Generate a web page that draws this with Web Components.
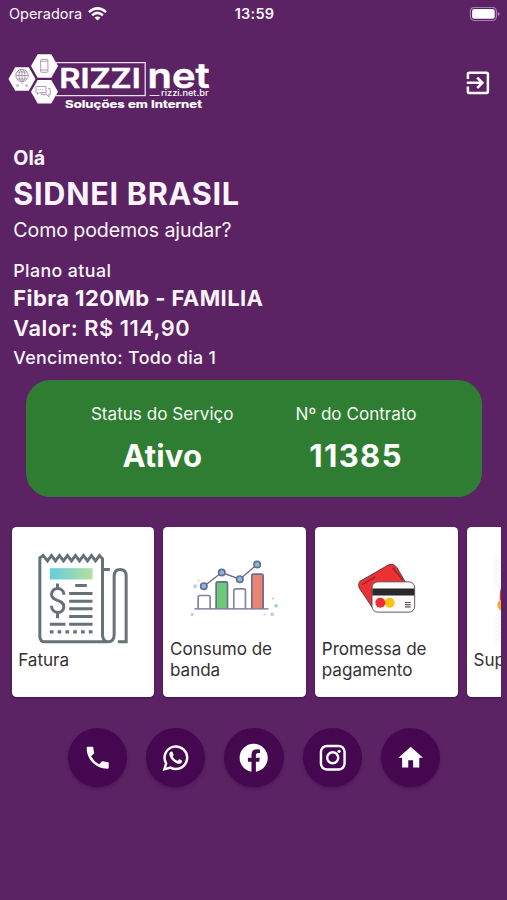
<!DOCTYPE html>
<html lang="pt-BR">
<head>
<meta charset="utf-8">
<title>Rizzi Net</title>
<style>
html,body{margin:0;padding:0;background:#5b2364}
body{font-family:Inter,"Liberation Sans",sans-serif;color:#fbf5fb}
</style>
</head>
<body>
<rizzi-app></rizzi-app>
<script>
function define(name, html) {
  const tpl = document.createElement('template');
  tpl.innerHTML = html;
  customElements.define(name, class extends HTMLElement {
    constructor() {
      super();
      this.attachShadow({ mode: 'open' }).appendChild(tpl.content.cloneNode(true));
    }
  });
}

define('status-bar', `
<style>
:host{display:grid;grid-template-columns:1fr auto 1fr;align-items:center;height:28px;padding:0 7px 0 9px;font-size:14.5px;line-height:28px}
.l{display:flex;align-items:center;gap:6px;letter-spacing:-.02px}
.t{font-weight:600;letter-spacing:.25px}
.r{justify-self:end;display:flex}
.r svg,.l svg{display:block}
</style>
<div class="l"><span>Operadora</span>
<svg width="19" height="14" viewBox="0 0 19 14" fill="none" stroke="#fff" stroke-width="2.5"><path d="M1 5.1Q9.5-2.4 18 5.1"/><path d="M4.1 8.3Q9.5 3.5 14.9 8.3"/><path d="M9.5 13.6L6.4 10.6Q9.5 8.2 12.6 10.6Z" fill="#fff" stroke="none"/></svg></div>
<span class="t">13:59</span>
<div class="r"><svg width="31" height="15" viewBox="0 0 31 15"><rect x="1.4" y=".3" width="26" height="13.2" rx="4" fill="none" stroke="#a27fa8" stroke-width="1.2"/><rect x="3.1" y="2" width="22.6" height="9.8" rx="2.2" fill="#fff"/><path d="M28.8 4.7q2 .7 2 2.2t-2 2.2z" fill="#a27fa8"/></svg></div>
`);

define('brand-logo', `
<style>
:host{display:block}
svg{display:block}
text{fill:#fff;font-family:Inter,"Liberation Sans",sans-serif}
</style>
<svg width="216" height="64" viewBox="0 50 216 64">
<g fill="none" stroke="#e9dcec" stroke-width="1.3"><path d="M56 62.7H145.2V95.6H56"/></g>
<g fill="#fff"><path d="M8.5 79L15.2 67.2H28.8L35.5 79L28.8 90.8H15.2Z"/><path d="M31 66L37.7 54.2H51.3L58 66L51.3 77.8H37.7Z"/><path d="M31 91.7L37.7 79.9H51.3L58 91.7L51.3 103.5H37.7Z"/></g>
<g fill="none" stroke="#a58caa" stroke-width=".9">
<rect x="40.7" y="59.3" width="7.2" height="13" rx="1"/><path d="M40.7 61.2h7.2M40.7 70h7.2"/>
<circle cx="22" cy="75.5" r="6.2"/><ellipse cx="22" cy="75.5" rx="3" ry="6.2"/><path d="M22 69.3v14.5M15.8 75.5h12.4M17 72h10M17 79h10"/>
<path d="M36 86.5h10v6.2h-6.5l-2 2v-2H36zM47.8 88.7h2.4v6h-1.4v2.2l-2.4-2.2h-4.8v-1.6"/><path d="M38.3 89.6h5.5" stroke-dasharray="1 1"/>
</g>
<circle cx="17.5" cy="85.5" r="1.5" fill="#c9b9cc"/><circle cx="26.5" cy="85.5" r="1.5" fill="#c9b9cc"/>
<text x="59.3" y="88.3" font-size="26.5" font-weight="600" stroke="#fff" stroke-width=".5" textLength="81.5" lengthAdjust="spacingAndGlyphs">RIZZI</text>
<text x="147.5" y="88" font-size="34.5" font-weight="600" stroke="#fff" stroke-width=".5" textLength="62" lengthAdjust="spacingAndGlyphs">net</text>
<path d="M149.5 95.5H159.5" stroke="#e9dcec" stroke-width="1"/>
<text x="161" y="95.6" font-size="8.6" font-weight="500" textLength="47.5" lengthAdjust="spacingAndGlyphs">rizzi.net.br</text>
<text x="65" y="108.4" font-size="11" font-weight="700" stroke="#fff" stroke-width=".2" textLength="137" lengthAdjust="spacingAndGlyphs">Soluções em Internet</text>
</svg>`);

define('app-header', `
<style>
:host{display:flex;align-items:flex-start;justify-content:space-between;padding:22px 17.2px 0 0;height:92px;box-sizing:content-box}
.exit{display:block;margin-top:20.5px}
</style>
<brand-logo></brand-logo>
<svg class="exit" width="24" height="24" viewBox="0 0 24 24" fill="none" stroke="#fff" stroke-width="2.5"><path d="M1.9 8V3.1Q1.9 1.7 3.3 1.7H20.5Q21.9 1.7 21.9 3.1V20.5Q21.9 21.9 20.5 21.9H3.3Q1.9 21.9 1.9 20.5V15.6M.8 11.8H15M11.2 6.6L16.4 11.8L11.2 17"/></svg>`);

define('customer-summary', `
<style>
:host{display:flex;flex-direction:column;padding-left:13.3px;margin-top:-.5px;white-space:nowrap}
.hello{font-weight:700;font-size:19.6px;line-height:32px}
.name{font-weight:700;font-size:30.6px;line-height:40px;letter-spacing:.72px}
.ask{font-size:19.6px;line-height:32px;letter-spacing:-.1px}
.label{margin-top:10px;font-weight:500;font-size:17.8px;line-height:29px;letter-spacing:.4px}
.plan{font-weight:700;font-size:22px;line-height:27px;letter-spacing:.4px}
.price{font-weight:600;font-size:21.8px;line-height:32px;letter-spacing:.53px}
.due{font-weight:500;font-size:17.8px;line-height:27px;letter-spacing:.3px}
</style>
<div class="hello">Olá</div>
<div class="name">SIDNEI BRASIL</div>
<div class="ask">Como podemos ajudar?</div>
<div class="label">Plano atual</div>
<div class="plan">Fibra 120Mb - FAMILIA</div>
<div class="price">Valor: R$ 114,90</div>
<div class="due">Vencimento: Todo dia 1</div>`);

define('contract-status', `
<style>
:host{display:flex;justify-content:space-evenly;box-sizing:border-box;margin:9.5px 25.5px 0 26px;height:117px;padding:18px 3px 0 3px;border-radius:24.5px;background:#2f7d33;color:#f4faf0}
</style><slot></slot>`);

define('status-item', `
<style>
:host{display:flex;flex-direction:column;align-items:center;font-size:17.1px;line-height:32px;white-space:nowrap}
.v{font-weight:700;font-size:31px;line-height:52px;color:#fff;letter-spacing:var(--track,.1px)}
</style><slot></slot><div class="v"><slot name="value"></slot></div>`);

define('card-strip', `
<style>
:host{display:flex;gap:9.3px;margin:29.7px 6px 0 0;padding-left:11.5px;overflow:hidden;height:175px}
</style><slot></slot>`);

define('service-card', `
<style>
:host{display:block;flex:none;box-sizing:border-box;width:142.5px;height:170px;border-radius:4.5px;background:#fff;color:#343036;box-shadow:0 1px 2px #30083a99}
.pic{height:105.5px}
.txt{display:flex;align-items:center;height:54px;padding:0 6px 0 6.7px;font-size:17.1px;line-height:21px;letter-spacing:-.04px}
::slotted(svg){display:block;width:142.5px;height:106px;overflow:visible}
</style>
<div class="pic"><slot name="icon"></slot></div><div class="txt"><span><slot></slot></span></div>`);

define('contact-bar', `
<style>:host{display:flex;justify-content:center;gap:19px;margin-top:26.3px;padding-left:1px}</style><slot></slot>`);

define('round-button', `
<style>
:host{display:grid;place-items:center;width:59.3px;height:59.3px;border-radius:50%;background:#460751;box-shadow:0 2px 3px #3d0b4880}
::slotted(svg){display:block;width:29.4px;height:29.4px;fill:#fff}
</style><slot></slot>`);

define('rizzi-app', `
<style>
:host{display:block;width:507px;height:900px;overflow:hidden;background:#5b2364}
</style>
<status-bar></status-bar>
<app-header></app-header>
<customer-summary></customer-summary>
<contract-status>
  <status-item>Status do Serviço<span slot="value">Ativo</span></status-item>
  <status-item style="--track:1.4px">Nº do Contrato<span slot="value">11385</span></status-item>
</contract-status>
<card-strip>
  <service-card>
    <svg slot="icon" viewBox="36.5 34.5 427.5 318" fill="none" stroke="#687178" stroke-width="9">
      <defs><linearGradient id="bar"><stop offset="0" stop-color="#62cfdc"/><stop offset="1" stop-color="#b5dea0"/></linearGradient></defs>
      <path d="M120 367V127L130 120L143 136L155 120L167 136L179 120L191 136L203 120L215 136L227 120L239 136L251 120L263 136L275 120L287 136L299 120L308 130V357Q308 379 325 379Q343 379 343 357V182Q343 162 361 162Q379 162 379 182V379H354M120 362Q120 379 137 379H325M308 162H330"/>
      <rect x="150" y="158" width="128" height="34" fill="url(#bar)" stroke="none"/>
      <path d="M226 210H261M208 234H278M208 257H278M208 280H278M208 303H278M208 326H278M150 326H197"/>
      <path d="M150 349H280" stroke-width="10" stroke-dasharray="11 12.4"/>
      <path d="M173 204V219M173 291V308M192 238C192 213 155 213 155 237C155 260 192 249 192 274C192 297 155 297 155 271"/>
    </svg>Fatura</service-card>
  <service-card>
    <svg slot="icon" viewBox="9.6 34.5 427.5 318" fill="none" stroke="#6b6c88" stroke-width="5">
      <path d="M115 279V245Q115 240 120 240H146Q151 240 151 245V279" stroke="#82849c"/>
      <path d="M169 279V204Q169 199 174 199H198Q203 199 203 204V279" fill="#6ccb7b"/>
      <path d="M222 279V225Q222 220 227 220H252Q257 220 257 225V279" stroke="#82849c"/>
      <path d="M276 279V181Q276 176 281 176H305Q310 176 310 181V279" fill="#e98673"/>
      <path d="M104 280H326M132 212L186 171L240 191L292 147" stroke-width="4"/>
      <g fill="#80bbeb"><circle cx="132" cy="212" r="9.5"/><circle cx="186" cy="171" r="9.5"/><circle cx="240" cy="191" r="9.5"/><circle cx="292" cy="147" r="9.5"/></g>
      <g stroke="none" fill="#cfcbd6"><circle cx="106" cy="212" r="6"/><circle cx="116" cy="195" r="3"/><circle cx="97" cy="297" r="5"/><circle cx="337" cy="296" r="6"/><circle cx="314" cy="297" r="3"/><circle cx="339" cy="249" r="3.5"/><circle cx="349" cy="271" r="5.5" fill="#9bcdf0"/></g>
    </svg>Consumo de banda</service-card>
  <service-card>
    <svg slot="icon" viewBox="15 34.5 427.5 318" fill="none" stroke="#554047" stroke-width="3">
      <path d="M149 198L236 148Q251 142 261 157L292 210L195 282L187 276L147 216Q144 206 149 198Z" fill="#ed3034"/>
      <path d="M157 207L196 184M248 156L278 194" stroke="#8d252e" stroke-width="4"/>
      <rect x="186" y="199" width="128" height="91" rx="17" fill="#fafafa" stroke-width="2.6"/>
      <path d="M187 219H313V240H187Z" fill="#2b282b" stroke="none"/>
      <circle cx="239" cy="262" r="15" fill="#fcc111" stroke="none"/><circle cx="211" cy="262" r="15" fill="#ef2e35" stroke="none"/>
      <path d="M285 261H302M285 267.5H302M285 274H302" stroke="#555" stroke-width="3.5"/>
    </svg>Promessa de pagamento</service-card>
  <service-card>
    <svg slot="icon" viewBox="470 34.5 427.5 318">
      <g stroke="#e2dce2" stroke-width="2" stroke-dasharray="8 0"><path d="M553 130l10-9M553 142l20-15M553 154l20-15M553 166l20-15M553 178l20-15M553 190l20-15M553 202l20-15M553 214l14-10M553 304l16-12M553 316l20-15M553 328l20-15M553 340l20-15M553 352l20-15M553 364l20-15M553 376l20-15M556 386l17-13"/></g>
      <path d="M580 202Q565 218 569 262H600V202Z" fill="#e3343b"/><path d="M580 251Q562 253 561 268Q562 285 580 288Z" fill="#f8a932"/>
    </svg>Suporte</service-card>
</card-strip>
<contact-bar>
  <round-button><svg viewBox="0 0 24 24"><path d="M6.62 10.79a15.15 15.15 0 0 0 6.59 6.59l2.2-2.2a1 1 0 0 1 1.02-.24c1.12.37 2.33.57 3.57.57a1 1 0 0 1 1 1V20a1 1 0 0 1-1 1C10.61 21 3 13.39 3 4a1 1 0 0 1 1-1h3.5a1 1 0 0 1 1 1c0 1.25.2 2.45.57 3.57a1 1 0 0 1-.25 1.02z"/></svg></round-button>
  <round-button><svg viewBox="0 0 24 24"><path d="M2.8 21.5L4.2 16.7A9.2 9.2 0 1 1 7.7 20.1Z" fill="none" stroke="#fff" stroke-width="2"/><path d="M8.4 6.9C8 6.9 6.8 7.7 6.8 9.2C6.8 12.4 11.6 17.2 14.8 17C16.3 17 17.3 15.8 17.3 14.6C17.2 14.1 15.6 13.5 15 13.2C14.6 13.1 14 14.4 13.6 14.5C12.5 14.6 9.5 11.7 9.6 11C9.7 10.6 10.4 10.1 10.3 9.6L9.4 7.4C9.2 7 8.8 6.9 8.4 6.9Z"/></svg></round-button>
  <round-button><svg viewBox="0 0 24 24"><path d="M23.5 12.07C23.5 5.72 18.35.57 12 .57S.5 5.72.5 12.07c0 5.74 4.2 10.5 9.7 11.36v-8.04H7.28v-3.32h2.92V9.53c0-2.88 1.72-4.47 4.34-4.47 1.26 0 2.58.22 2.58.22v2.84h-1.45c-1.43 0-1.87.89-1.87 1.8v2.15h3.19l-.51 3.32H13.8v8.04c5.5-.86 9.7-5.62 9.7-11.36z"/></svg></round-button>
  <round-button><svg viewBox="0 0 24 24"><rect x="2.4" y="2.4" width="19.3" height="19.3" rx="5" fill="none" stroke="#fff" stroke-width="2"/><circle cx="12" cy="12" r="4.5" fill="none" stroke="#fff" stroke-width="2"/><circle cx="17.2" cy="6.8" r="1.35"/></svg></round-button>
  <round-button><svg viewBox="0 0 24 24"><path d="M10 20v-6h4v6h5v-8h3L12 3 2 12h3v8z"/></svg></round-button>
</contact-bar>`);
</script>
</body>
</html>
